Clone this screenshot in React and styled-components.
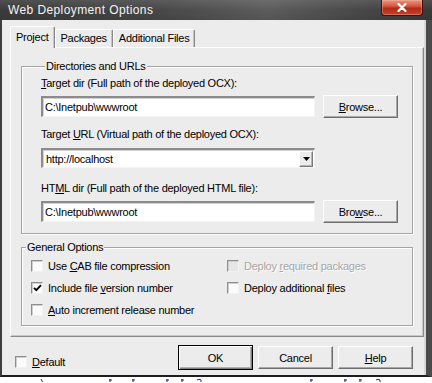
import React from 'react';
import styled, { createGlobalStyle, css } from 'styled-components';

const GlobalStyle = createGlobalStyle`
  html, body { margin: 0; padding: 0; background: #ffffff; }
  body {
    font-family: "Liberation Sans", Arial, sans-serif;
    font-size: 11px;
    letter-spacing: -0.25px;
    color: #000;
  }
  * { box-sizing: border-box; }
`;

const FACE = '#ececec';

const Window = styled.div`
  width: 432px;
  display: flex;
  flex-direction: column;
`;

const TitleBar = styled.div`
  height: 20px;
  display: flex;
  align-items: flex-start;
  justify-content: space-between;
  padding: 0 9px 0 8px;
  background:
    linear-gradient(180deg, rgba(255,255,255,0.10) 0%, rgba(255,255,255,0) 50%, rgba(0,0,0,0.08) 100%),
    linear-gradient(90deg, #3b3b3b 0%, #474747 35%, #5c5c5c 62%, #4d4d4d 78%, #3a3a3a 100%);
`;

const TitleText = styled.span`
  color: #f4f4f4;
  font-family: "Liberation Sans", Arial, sans-serif;
  font-weight: 400;
  font-size: 12px;
  line-height: 21px;
  letter-spacing: 0.4px;
`;

const CloseButton = styled.div`
  width: 42px;
  height: 16px;
  display: flex;
  align-items: center;
  justify-content: center;
  border: 1px solid #3e120a;
  border-top: none;
  border-radius: 0 0 4px 4px;
  background: linear-gradient(180deg, #e99482 0%, #d45a43 40%, #b52a14 55%, #c5412a 100%);
  box-shadow: inset 0 0 0 1px rgba(255, 200, 180, 0.35);
`;

const Body = styled.div`
  height: 357px;
  display: flex;
  flex-direction: column;
  background: ${FACE};
  border-left: 2px solid #3e3e3e;
  border-right: 6px solid #4a4a4a;
  border-bottom: 2px solid #1d1d1d;
  box-shadow: inset -2px 0 0 #d8d8d8;
`;

const TabStrip = styled.div`
  display: flex;
  align-items: flex-end;
  height: 21px;
  margin-top: 6px;
  padding-left: 8px;
  position: relative;
  z-index: 1;
`;

const Tab = styled.div`
  height: ${p => (p.$active ? 22 : 18)}px;
  margin-bottom: ${p => (p.$active ? -1 : 0)}px;
  padding: ${p => (p.$active ? '4px 5px 0' : '2px 5px 0')};
  line-height: 13px;
  background: ${FACE};
  border-top: 1px solid #ffffff;
  border-left: 1px solid #ffffff;
  border-right: 1px solid #8a8a8a;
  border-radius: 2px 2px 0 0;
  box-shadow: inset -1px 0 0 #c4c4c4;
  white-space: nowrap;
`;

const Panel = styled.div`
  display: flex;
  flex-direction: column;
  margin: 0 2px 0 8px;
  padding: 0 10px 10px 10px;
  border: 1px solid;
  border-color: #ffffff #8a8a8a #8a8a8a #ffffff;
  box-shadow: inset -1px -1px 0 #c8c8c8;
`;

const Group = styled.div`
  display: flex;
  flex-direction: column;
  margin-top: ${p => p.$top}px;
  padding: ${p => p.$pad};
  border: 1px solid #a3a3a3;
  box-shadow: inset 1px 1px 0 #ffffff, 1px 1px 0 #ffffff;
`;

const GroupTitle = styled.div`
  align-self: flex-start;
  height: 13px;
  line-height: 13px;
  margin: -7px 0 0 ${p => p.$left}px;
  padding: 0 1px;
  background: ${FACE};
`;

const FieldLabel = styled.div`
  line-height: 13px;
  height: 13px;
  margin-top: ${p => p.$top}px;
  white-space: nowrap;
`;

const U = styled.span`
  text-decoration: underline;
  text-underline-offset: 1px;
`;

const Row = styled.div`
  display: flex;
  align-items: center;
  gap: 8px;
  height: 23px;
  margin-top: ${p => p.$top}px;
`;

const sunken = css`
  background: #ffffff;
  border-top: 2px solid #8c8c8c;
  border-left: 2px solid #8c8c8c;
  border-right: 1px solid #f4f4f4;
  border-bottom: 1px solid #f4f4f4;
  box-shadow: inset 1px 1px 0 #d2d2d2;
`;

const TextBox = styled.input`
  ${sunken};
  width: 274px;
  height: 21px;
  padding: 0 2px;
  margin: 0;
  font: inherit;
  letter-spacing: -0.25px;
  color: #000;
  outline: none;
`;

const SelectBox = styled.div`
  ${sunken};
  width: 274px;
  height: 20px;
  margin-top: ${p => p.$top}px;
  display: flex;
  align-items: center;
  justify-content: space-between;
  padding: 0 1px 0 3px;
`;

const DropButton = styled.div`
  width: 14px;
  height: 16px;
  display: flex;
  align-items: center;
  justify-content: center;
  background: ${FACE};
  border: 1px solid;
  border-color: #ffffff #7a7a7a #7a7a7a #ffffff;
  box-shadow: inset -1px -1px 0 #b5b5b5;
`;

const Button = styled.button`
  width: 75px;
  height: ${p => p.$h}px;
  margin: 0;
  padding: 0;
  font: inherit;
  letter-spacing: -0.25px;
  color: #000;
  background: ${FACE};
  border: 1px solid;
  border-color: #ffffff #6e6e6e #6e6e6e #ffffff;
  box-shadow: inset -1px -1px 0 #a8a8a8;
  ${p =>
    p.$default &&
    css`
      border-color: #000;
      box-shadow: inset 1px 1px 0 #ffffff, inset -1px -1px 0 #808080, inset -2px -2px 0 #b0b0b0;
    `}
`;

const OptionsGrid = styled.div`
  display: grid;
  grid-template-columns: 196px 1fr;
  grid-auto-rows: 22px;
  margin-top: 1px;
`;

const CheckLabel = styled.label`
  display: flex;
  align-items: center;
  gap: 5px;
  white-space: nowrap;
  color: ${p => (p.$disabled ? '#a6a6a6' : '#000')};
  text-shadow: ${p => (p.$disabled ? '1px 1px 0 #ffffff' : 'none')};
  margin-top: ${p => p.$top || 0}px;
`;

const Box = styled.span`
  width: 12px;
  height: 12px;
  flex: none;
  display: flex;
  align-items: center;
  justify-content: center;
  background: ${p => (p.$disabled ? '#e6e6e6' : '#fbfbfb')};
  border: 1px solid;
  border-color: #8e8e8e #f2f2f2 #f2f2f2 #8e8e8e;
  box-shadow: inset 1px 1px 0 #cfcfcf;
`;

const Footer = styled.div`
  display: flex;
  align-items: flex-start;
  padding: 8px 13px 0 13px;
`;

const ButtonBar = styled.div`
  margin-left: auto;
  display: flex;
  align-items: center;
  gap: 5px;
  height: 25px;
`;

const Remnants = styled.div`
  height: 6px;
  display: flex;
`;

const Check = ({ checked, disabled, children, top }) => (
  <CheckLabel $disabled={disabled} $top={top}>
    <Box $disabled={disabled}>
      {checked && (
        <svg width="9" height="8" viewBox="0 0 9 8">
          <path d="M1 3.8 L3.3 6.2 L8 1.2" stroke="#000" strokeWidth="1.9" fill="none" />
        </svg>
      )}
    </Box>
    <span>{children}</span>
  </CheckLabel>
);

export default function App() {
  return (
    <>
      <GlobalStyle />
      <Window>
        <TitleBar>
          <TitleText>Web Deployment Options</TitleText>
          <CloseButton>
            <svg width="10" height="9" viewBox="0 0 10 9">
              <path d="M1.5 1 L8.5 8 M8.5 1 L1.5 8" stroke="#fff" strokeWidth="2.2" strokeLinecap="round" />
            </svg>
          </CloseButton>
        </TitleBar>
        <Body>
          <TabStrip>
            <Tab $active>Project</Tab>
            <Tab>Packages</Tab>
            <Tab>Additional Files</Tab>
          </TabStrip>
          <Panel>
            <Group $top={18} $pad="0 13px 10px 19px">
              <GroupTitle $left={4}>Directories and URLs</GroupTitle>
              <FieldLabel $top={4}>
                <U>T</U>arget dir (Full path of the deployed OCX):
              </FieldLabel>
              <Row $top={5}>
                <TextBox readOnly value={'C:\\Inetpub\\wwwroot'} />
                <Button $h={23}>
                  <U>B</U>rowse...
                </Button>
              </Row>
              <FieldLabel $top={10}>
                Target <U>U</U>RL (Virtual path of the deployed OCX):
              </FieldLabel>
              <SelectBox $top={7}>
                <span>http://localhost</span>
                <DropButton>
                  <svg width="7" height="4" viewBox="0 0 7 4">
                    <path d="M0 0 H7 L3.5 4 Z" fill="#000" />
                  </svg>
                </DropButton>
              </SelectBox>
              <FieldLabel $top={14}>
                HT<U>M</U>L dir (Full path of the deployed HTML file):
              </FieldLabel>
              <Row $top={5}>
                <TextBox readOnly value={'C:\\Inetpub\\wwwroot'} />
                <Button $h={23}>
                  Bro<U>w</U>se...
                </Button>
              </Row>
            </Group>
            <Group $top={13} $pad="0 10px 4px 9px">
              <GroupTitle $left={-5}>General Options</GroupTitle>
              <OptionsGrid>
                <Check>
                  Use <U>C</U>AB file compression
                </Check>
                <Check disabled>
                  Deploy <U>r</U>equired packages
                </Check>
                <Check checked>
                  Include file <U>v</U>ersion number
                </Check>
                <Check>
                  Deploy additional <U>f</U>iles
                </Check>
                <Check>
                  <U>A</U>uto increment release number
                </Check>
              </OptionsGrid>
            </Group>
          </Panel>
          <Footer>
            <Check top={11}>
              <U>D</U>efault
            </Check>
            <ButtonBar>
              <Button $h={25} $default>OK</Button>
              <Button $h={23}>Cancel</Button>
              <Button $h={23}>
                <U>H</U>elp
              </Button>
            </ButtonBar>
          </Footer>
        </Body>
        <Remnants>
          <svg width="432" height="6" viewBox="0 0 432 6">
            <g stroke="#23239a" strokeWidth="1" fill="none">
              <path d="M41 2 L42.5 5" />
              <path d="M110 2 V5 M109 3 H112" />
              <path d="M133 2 V5 M132 3 H135" />
              <path d="M167 2 V5 M166 3 H169" />
              <path d="M182 2 V5 M181 3 H184" />
              <path d="M197 3 Q199 1.5 201 3 V5" />
              <path d="M311 2 V5 M310 3 H313" />
              <path d="M345 2 V5 M344 3 H347" />
              <path d="M360 2 V5 M359 3 H362" />
              <path d="M376 3 Q378 1.5 380 3 V5" />
            </g>
          </svg>
        </Remnants>
      </Window>
    </>
  );
}
